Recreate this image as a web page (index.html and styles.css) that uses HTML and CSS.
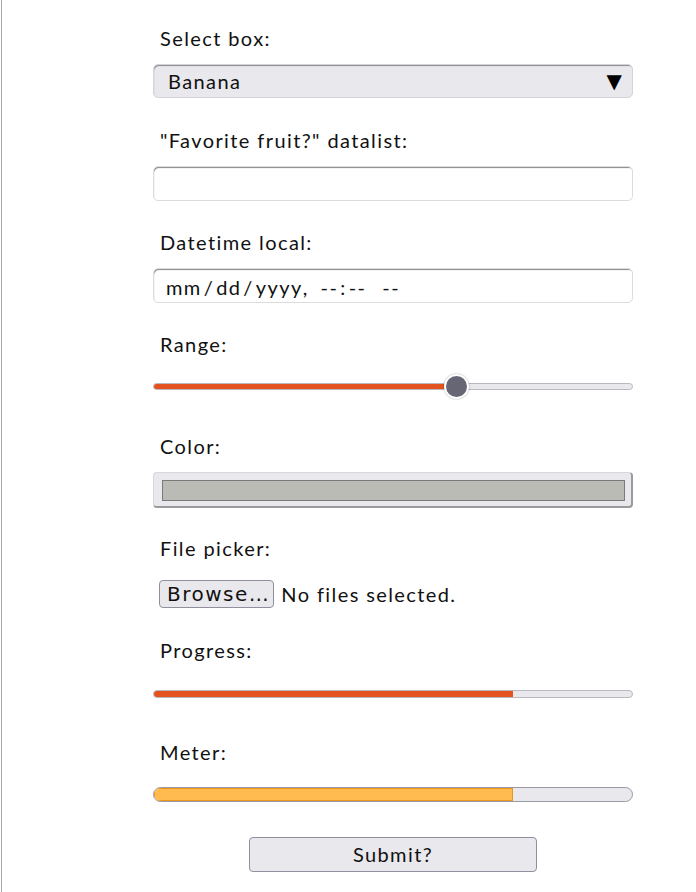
FILE: index.html
```html
<!DOCTYPE html>
<html lang="en">
<head>
<meta charset="utf-8">
<title>Form controls</title>
<link rel="stylesheet" href="styles.css">
</head>
<body>
<div class="page">
  <form class="form">
    <div class="field">
      <div class="label">Select box:</div>
      <div class="select"><span>Banana</span><span class="caret">▼</span></div>
    </div>
    <div class="field">
      <div class="label">"Favorite fruit?" datalist:</div>
      <div class="text-input"></div>
    </div>
    <div class="field">
      <div class="label">Datetime local:</div>
      <div class="text-input dt"><span>mm</span><span class="sep">/</span><span>dd</span><span class="sep">/</span><span>yyyy</span><span class="comma">,</span><span class="time">--</span><span class="colon">:</span><span>--</span><span class="ampm">--</span></div>
    </div>
    <div class="field">
      <div class="label">Range:</div>
      <div class="range">
        <div class="range-track">
          <div class="range-fill" style="width: 63%"></div>
        </div>
        <div class="range-thumb" style="left: 63%"></div>
      </div>
    </div>
    <div class="field">
      <div class="label">Color:</div>
      <div class="color"><div class="swatch"></div></div>
    </div>
    <div class="field">
      <div class="label">File picker:</div>
      <div class="file"><span class="browse">Browse…</span><span class="nofile">No files selected.</span></div>
    </div>
    <div class="field">
      <div class="label">Progress:</div>
      <div class="progress-wrap">
        <div class="progress"><div class="progress-fill" style="width: 75%"></div></div>
      </div>
    </div>
    <div class="field field-last">
      <div class="label">Meter:</div>
      <div class="meter-wrap">
        <div class="meter"><div class="meter-fill" style="width: 75%"></div></div>
      </div>
    </div>
    <div class="actions">
      <div class="submit">Submit?</div>
    </div>
  </form>
</div>
</body>
</html>
```
FILE: styles.css
```css
* { box-sizing: border-box; }
html, body { margin: 0; padding: 0; background: #fff; }
body {
  font-family: Lato, "Open Sans", sans-serif;
  font-size: 20px;
  letter-spacing: 1.4px;
  color: #111;
  padding-left: 1px;
}
.page {
  border-left: 1px solid #a8a8a8;
  min-height: 892px;
  padding-left: 151px;
  padding-top: 28px;
}
.form {
  width: 480px;
  display: flex;
  flex-direction: column;
}
.field {
  height: 102px;
  display: flex;
  flex-direction: column;
}
.field-last { height: 95px; }
.label {
  height: 24px;
  line-height: 20px;
  padding-left: 7px;
  margin-bottom: 12px;
}
.select {
  height: 34px;
  background: #e9e9ed;
  border-radius: 5px;
  border: 1px solid #d4d4d8;
  box-shadow: inset 1px 2px 1px -1px #8a8a8a;
  display: flex;
  align-items: center;
  justify-content: space-between;
  padding: 0 10px 0 14px;
}
.caret { font-family: "DejaVu Sans", sans-serif; font-size: 20px; color: #000; letter-spacing: 0; }
.text-input {
  height: 35px;
  background: #fff;
  border-radius: 5px;
  border: 1px solid #dcdcdc;
  box-shadow: inset 1px 2px 1px -1px #888;
}
.dt {
  display: flex;
  align-items: center;
  padding-left: 12px;
  padding-top: 2px;
}
.dt .sep { margin: 0 2px; }
.dt .comma { margin-right: 12px; }
.dt .colon { margin: 0 2px; }
.dt .ampm { margin-left: 16px; }
.range {
  position: relative;
  height: 33px;
  display: flex;
  align-items: center;
}
.range-track {
  width: 100%;
  height: 7px;
  border-radius: 4px;
  background: #e9e9ed;
  border: 1px solid #b8b8c0;
  overflow: hidden;
}
.range-fill {
  height: 100%;
  background: #e4521f;
}
.range-thumb {
  position: absolute;
  top: 4px;
  width: 25px;
  height: 25px;
  margin-left: -11px;
  border-radius: 50%;
  background: #666675;
  border: 2px solid #fff;
  box-shadow: 0 0 2px rgba(0,0,0,0.35);
}
.color {
  height: 36px;
  background: #e9e9ed;
  border-radius: 4px;
  border: 1px solid #d8d8dc;
  border-right: 2px solid #9a9a9a;
  border-bottom: 2px solid #9a9a9a;
  padding: 7px 6px 5px 8px;
}
.swatch {
  height: 21px;
  background: #b9bbb4;
  border: 1px solid #7a7a7a;
}
.file {
  height: 30px;
  display: flex;
  align-items: center;
  padding-left: 6px;
  margin-top: 5px;
}
.browse {
  font-family: "DejaVu Sans", sans-serif;
  font-size: 20px;
  letter-spacing: 1.5px;
  height: 28px;
  line-height: 26px;
  padding: 0 3px 0 7px;
  background: #e9e9ed;
  border: 1px solid #8f8f9d;
  border-radius: 4px;
  margin-right: 7px;
  color: #111;
}
.progress-wrap {
  height: 33px;
  display: flex;
  align-items: center;
  padding-top: 2px;
}
.progress {
  width: 100%;
  height: 8px;
  border-radius: 4px;
  background: #e9e9ed;
  border: 1px solid #b8b8c0;
  overflow: hidden;
}
.progress-fill { height: 100%; background: #e4521f; }
.meter-wrap {
  height: 33px;
  display: flex;
  align-items: center;
  padding-top: 0;
}
.meter {
  width: 100%;
  height: 15px;
  border-radius: 8px;
  background: #e9e9ed;
  border: 1px solid #9a9aa6;
  overflow: hidden;
}
.meter-fill {
  height: 100%;
  background: #ffbb4f;
  box-shadow: inset 0 0 0 1px #e8961e;
}
.actions {
  display: flex;
  justify-content: center;
}
.submit {
  width: 288px;
  height: 35px;
  line-height: 33px;
  text-align: center;
  background: #e9e9ed;
  border: 1px solid #8f8f9d;
  border-radius: 4px;
}
```
